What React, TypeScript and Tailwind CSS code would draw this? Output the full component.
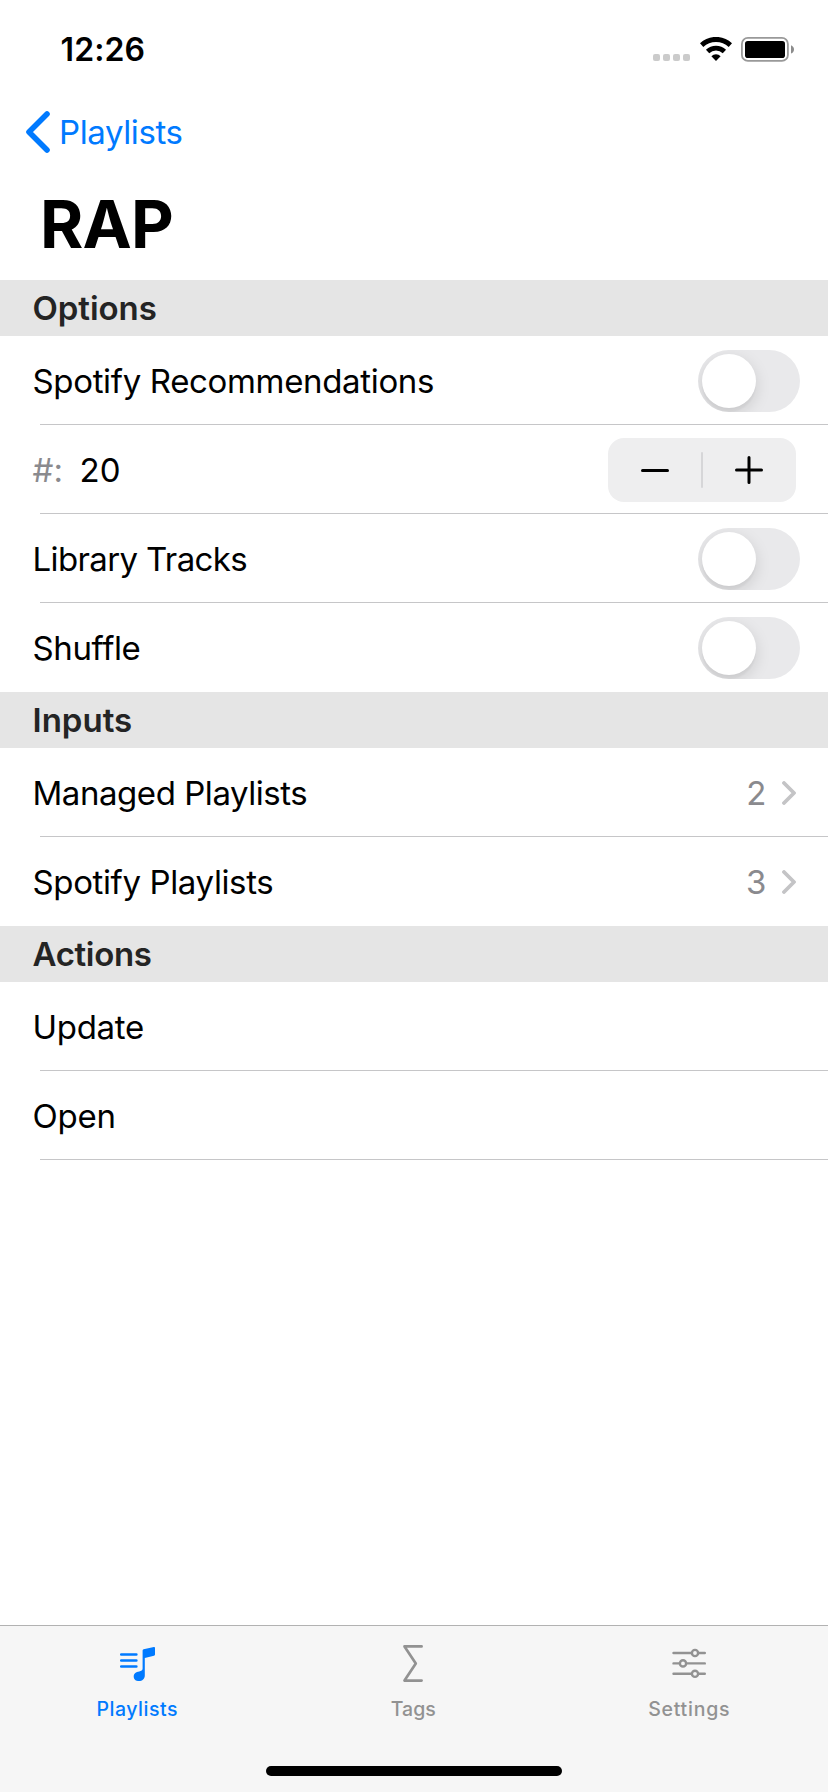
import type { ReactNode } from "react";

function StatusBar() {
  return (
    <div className="flex h-[88px] items-start justify-between pt-[30px] pr-[34px] pl-[60.5px]">
      <span className="text-[32px] leading-[40px] font-semibold tracking-[0.1px]">12:26</span>
      <div className="flex pt-[7px]">
        <div className="flex gap-[3px] pt-[17px]">
          {[0, 1, 2, 3].map((i) => (
            <span key={i} className="size-[7px] rounded-[2px] bg-[#cbcbcb]" />
          ))}
        </div>
        <svg className="ml-[9.5px] h-6 w-8" viewBox="0 0 32 24" fill="none" stroke="black">
          <path d="M1.6 8.07A21.1 21.1 0 0 1 30.4 8.07" strokeWidth="5" />
          <path d="M7.6 14.5A12.3 12.3 0 0 1 24.4 14.5" strokeWidth="4.8" />
          <path d="M16 23.9L11.4 19.2A6.4 6.4 0 0 1 20.6 19.2Z" fill="black" stroke="none" />
        </svg>
        <svg className="ml-[9.5px] h-[25px] w-[53px]" viewBox="0 0 53 25" fill="none">
          <rect x="0.9" y="0.9" width="46" height="23" rx="6" stroke="#999" strokeWidth="1.8" />
          <rect x="4" y="4" width="40" height="17" rx="2.8" fill="black" />
          <path d="M50 8.2C51.8 8.9 53 10.5 53 12.4S51.8 15.9 50 16.6Z" fill="#8c8c8c" />
        </svg>
      </div>
    </div>
  );
}

function Section({ title, spacing, children }: { title: string; spacing: string; children: ReactNode }) {
  return (
    <section>
      <h2 className="flex h-14 items-center bg-[#e5e5e5] pl-[32.5px] text-[33px] leading-[40px] font-semibold text-[#242424]">
        <span className={spacing}>{title}</span>
      </h2>
      {children}
    </section>
  );
}

function Row({ label, spacing, separator = true, children }: { label: ReactNode; spacing: string; separator?: boolean; children?: ReactNode }) {
  return (
    <div className="h-[89px]">
      <div className="flex h-[88px] items-center justify-between pt-[2px] pl-[32.5px]">
        <span className={`text-[33px] leading-[40px] whitespace-pre ${spacing}`}>{label}</span>
        {children}
      </div>
      {separator && <div className="ml-10 h-px bg-[#c6c6c8]" />}
    </div>
  );
}

function Toggle() {
  return (
    <button className="mr-7 h-[62px] w-[102px] overflow-hidden rounded-full bg-[#e9e9eb] p-1">
      <span className="block size-[54px] rounded-full bg-white shadow-[0_5px_16px_rgba(0,0,0,0.13),0_4px_2px_rgba(0,0,0,0.03)]" />
    </button>
  );
}

function Stepper() {
  return (
    <div className="mr-8 flex h-16 w-[188px] items-center rounded-2xl bg-[#eeeeef]">
      <svg className="h-16 w-[93px]" viewBox="0 0 93 64" stroke="black" strokeWidth="3" strokeLinecap="round">
        <path d="M34.5 32.5H59.5" />
      </svg>
      <span className="h-9 w-[2px] rounded-full bg-[#d6d6d8]" />
      <svg className="h-16 w-[93px]" viewBox="0 0 93 64" stroke="black" strokeWidth="3" strokeLinecap="round">
        <path d="M33.5 32H58.5M46 19.5V44.5" />
      </svg>
    </div>
  );
}

function Detail({ count }: { count: number }) {
  return (
    <div className="flex items-center pr-8">
      <span className="text-[33px] leading-[40px] text-[#8a8a8e]">{count}</span>
      <svg className="ml-[15.5px] h-6 w-[14px]" viewBox="0 0 14 24" fill="none" stroke="#c4c4c6" strokeWidth="3.8" strokeLinecap="round" strokeLinejoin="round">
        <path d="M2 2L12 12L2 22" />
      </svg>
    </div>
  );
}

function Tab({ label, className, children }: { label: string; className: string; children: ReactNode }) {
  return (
    <button className={`flex flex-1 flex-col items-center pt-[14px] ${className}`}>
      {children}
      <span className="mt-[9px] pr-[1.5px] text-[19.5px] leading-[24px] font-medium">{label}</span>
    </button>
  );
}

export default function App() {
  return (
    <div className="flex h-[1792px] w-[828px] flex-col bg-white font-[Inter,'Liberation_Sans',sans-serif] text-black">
      <StatusBar />
      <nav className="flex h-[88px] items-center pl-[26px] text-[#007aff]">
        <svg className="h-[42px] w-6" viewBox="0 0 24 42" fill="none" stroke="currentColor" strokeWidth="5.6" strokeLinecap="round" strokeLinejoin="round">
          <path d="M21 3L3 21L21 39" />
        </svg>
        <span className="ml-[9px] text-[33px] leading-[40px] tracking-[-0.4px]">Playlists</span>
      </nav>
      <h1 className="flex h-[104px] items-center pb-2 pl-[40px] text-[66px] leading-[80px] font-bold tracking-[-0.8px]">RAP</h1>

      <main className="flex-1">
        <Section title="Options" spacing="tracking-[-0.05px]">
          <Row label="Spotify Recommendations" spacing="tracking-[-0.34px]">
            <Toggle />
          </Row>
          <Row
            spacing="flex-1"
            label={
              <>
                <span className="text-[#8a8a8e]">#:</span>
                <span className="ml-[16.5px] tracking-[0.1px]">20</span>
              </>
            }
          >
            <Stepper />
          </Row>
          <Row label="Library Tracks" spacing="tracking-[-0.63px]">
            <Toggle />
          </Row>
          <Row label="Shuffle" spacing="tracking-[-0.37px]" separator={false}>
            <Toggle />
          </Row>
        </Section>
        <Section title="Inputs" spacing="tracking-normal">
          <Row label="Managed Playlists" spacing="tracking-[-0.45px]">
            <Detail count={2} />
          </Row>
          <Row label="Spotify Playlists" spacing="tracking-[-0.37px]" separator={false}>
            <Detail count={3} />
          </Row>
        </Section>
        <Section title="Actions" spacing="tracking-[-0.34px]">
          <Row label="Update" spacing="tracking-[-0.29px]" />
          <Row label="Open" spacing="tracking-[-0.23px]" />
        </Section>
      </main>

      <footer className="h-[167px] border-t border-[#b2b2b2] bg-[#f6f6f6]">
        <div className="flex h-[140px]">
          <Tab label="Playlists" className="tracking-[0.52px] text-[#007aff]">
            <svg className="size-12" viewBox="114 1640 48 48" fill="currentColor">
              <path d="M121.2 1654.4H136.4M121.2 1660.5H136.4M121.2 1666.5H136.4" stroke="currentColor" strokeWidth="2.5" strokeLinecap="round" />
              <path d="M142.6 1650.4Q142.6 1649.4 143.6 1649.2L153.9 1647Q155 1646.8 155 1647.9V1654.6Q155 1655.5 154 1655.8L144.8 1658V1675.5C144.8 1679 142.3 1681 139 1681C136 1681 133.7 1679.3 133.7 1676.4C133.7 1673.6 136 1671.6 139.2 1671.4C141.3 1671.2 142.6 1670.7 142.6 1668.6Z" />
            </svg>
          </Tab>
          <Tab label="Tags" className="text-[#929292]">
            <svg className="size-12" viewBox="390 1640 48 48" fill="none" stroke="currentColor" strokeWidth="2.7" strokeLinecap="round" strokeLinejoin="round">
              <path d="M421.6 1646.4H404.5L415.8 1663.4L404.5 1680.6H421.6" />
            </svg>
          </Tab>
          <Tab label="Settings" className="tracking-[0.78px] text-[#929292]">
            <svg className="size-12" viewBox="666 1640 48 48" fill="none" stroke="currentColor" strokeWidth="2.4" strokeLinecap="round">
              <path d="M673.5 1653H691.6M698.4 1653H704.8M673.5 1663.4H679.6M686.4 1663.4H704.8M673.5 1673.8H691.6M698.4 1673.8H704.8" />
              <circle cx="695" cy="1653" r="3.1" />
              <circle cx="683" cy="1663.4" r="3.1" />
              <circle cx="695" cy="1673.8" r="3.1" />
            </svg>
          </Tab>
        </div>
        <div className="mx-auto h-[10px] w-[296px] rounded-full bg-black" />
      </footer>
    </div>
  );
}
